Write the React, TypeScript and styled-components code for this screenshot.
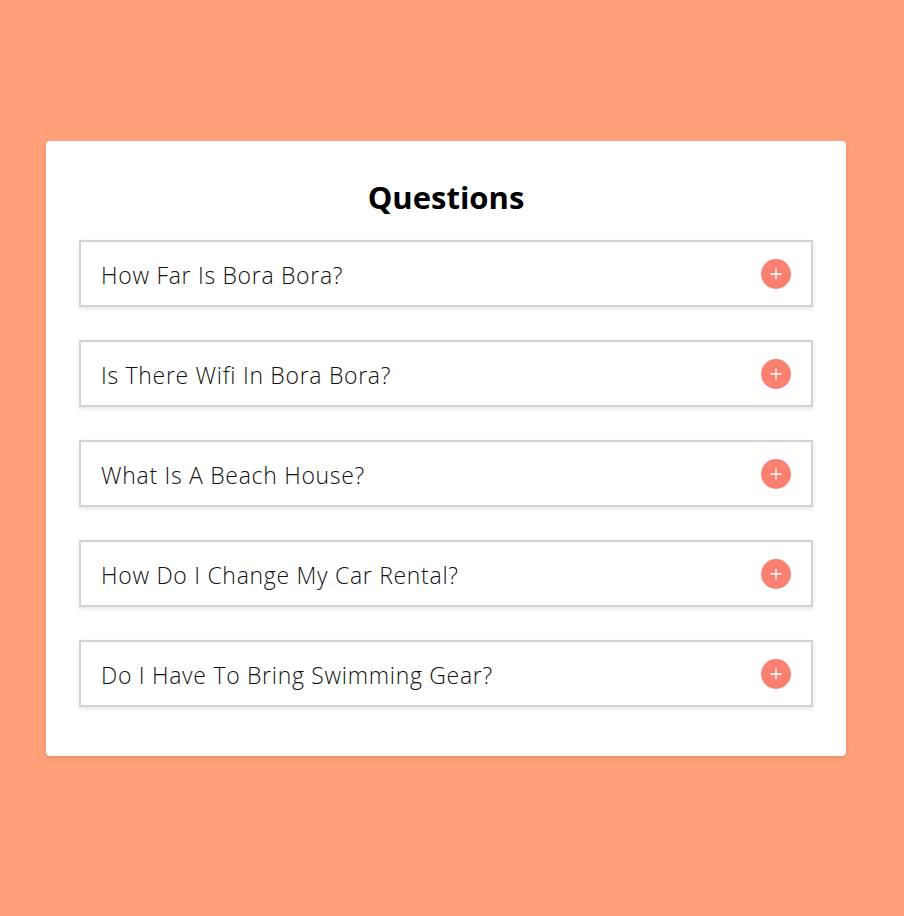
import React from "react";
import styled, { createGlobalStyle } from "styled-components";

const Global = createGlobalStyle`
  html, body { margin: 0; padding: 0; }
  body {
    background: #ffa07a;
    font-family: "Open Sans", "Noto Sans", sans-serif;
    min-height: 916px;
  }
`;

const Page = styled.div`
  width: 892px;
  display: flex;
  justify-content: center;
  padding-top: 141px;
`;

const Card = styled.div`
  width: 800px;
  box-sizing: border-box;
  background: #fff;
  border-radius: 4px;
  padding: 36px 33px 49px;
  box-shadow: 0 2px 4px rgba(0, 0, 0, 0.12);
`;

const Title = styled.h1`
  margin: 0 0 23px;
  text-align: center;
  font-size: 31px;
  line-height: 40px;
  font-weight: 700;
  color: #000;
`;

const List = styled.div`
  display: flex;
  flex-direction: column;
  gap: 33px;
`;

const Item = styled.div`
  height: 67px;
  box-sizing: border-box;
  border: 2px solid #d3d3d3;
  box-shadow: 0 2px 4px rgba(0, 0, 0, 0.1);
  display: flex;
  align-items: center;
  justify-content: space-between;
  padding: 0 20px;
`;

const Question = styled.span`
  font-size: 23px;
  font-weight: 300;
  color: #111;
  letter-spacing: 0.7px;
  padding-top: 2px;
`;

const Toggle = styled.button`
  width: 30px;
  height: 30px;
  border-radius: 50%;
  border: none;
  padding: 0;
  background: #fa8072;
  display: flex;
  align-items: center;
  justify-content: center;
  cursor: pointer;
`;

const questions = [
  "How Far Is Bora Bora?",
  "Is There Wifi In Bora Bora?",
  "What Is A Beach House?",
  "How Do I Change My Car Rental?",
  "Do I Have To Bring Swimming Gear?",
];

export default function App() {
  return (
    <>
      <Global />
      <Page>
        <Card>
          <Title>Questions</Title>
          <List>
            {questions.map((q) => (
              <Item key={q}>
                <Question>{q}</Question>
                <Toggle aria-label="expand">
                  <svg width="12" height="12" viewBox="0 0 12 12">
                    <path d="M6 0.5V11.5M0.5 6H11.5" stroke="#fff" strokeWidth="1.3" fill="none" />
                  </svg>
                </Toggle>
              </Item>
            ))}
          </List>
        </Card>
      </Page>
    </>
  );
}
